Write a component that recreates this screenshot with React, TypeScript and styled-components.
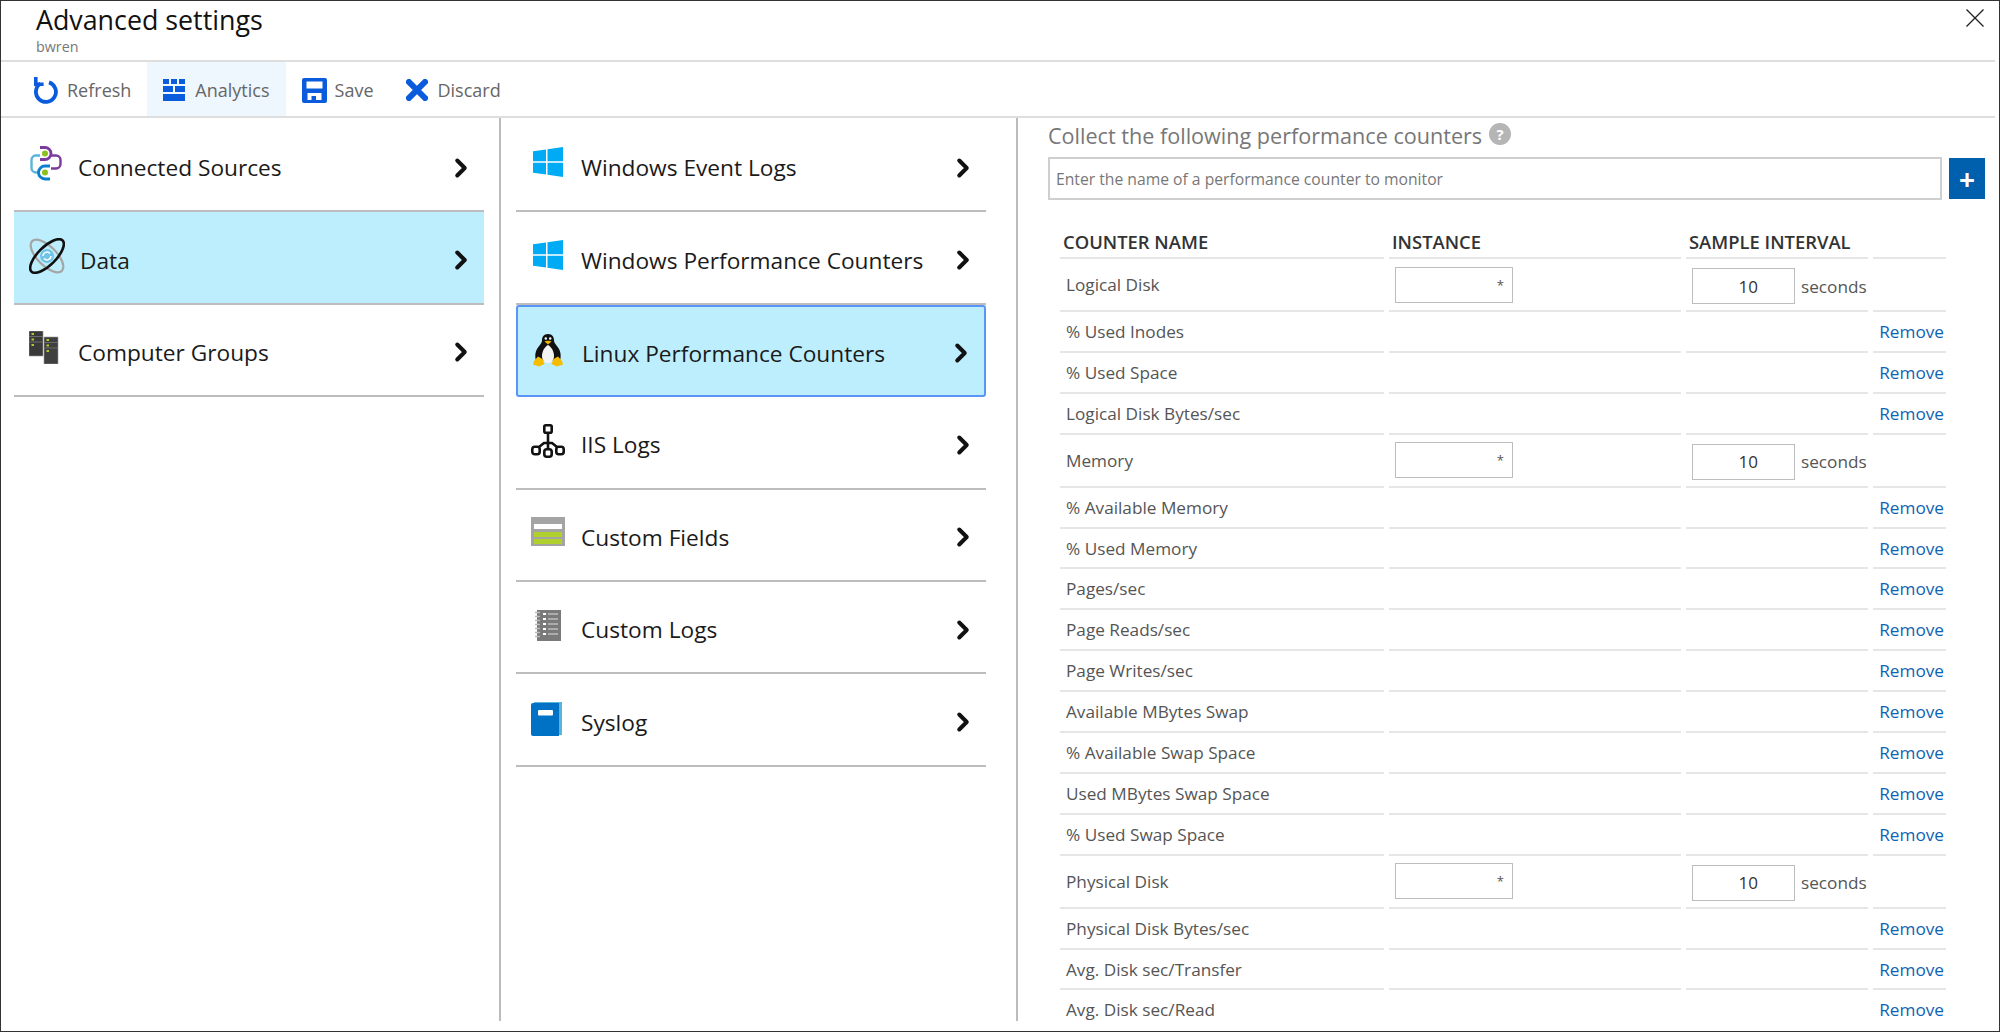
import React from "react";
import styled, { createGlobalStyle } from "styled-components";
import { FiChevronRight } from "react-icons/fi";

const GlobalStyle = createGlobalStyle`
  html, body {
    margin: 0;
    padding: 0;
    background: #fff;
    font-family: "Open Sans", "Liberation Sans", sans-serif;
  }
  * { box-sizing: border-box; }
`;

const blue = "#0a5cdc";

const RefreshIcon = () => (
  <svg width="26" height="27" viewBox="0 1 26 27">
    <path d="M7.500 7.500A10 10 0 1 0 16 6.400" fill="none" stroke={blue} strokeWidth="3.800" />
    <path d="M1 1h3.600v5.500h6v3.600H1z" fill={blue} />
  </svg>
);

const AnalyticsIcon = () => (
  <svg width="22" height="22" viewBox="0 0 22 22">
    <path d="M0 0h6v5H0zM8 0h6v5H8zM16 0h6v5h-6zM0 7h10v6H0zM12 7h10v6H12zM0 15h22v7H0z" fill={blue} />
  </svg>
);

const SaveIcon = () => (
  <svg width="25" height="25" viewBox="0 0 25 25">
    <path d="M2 0h21a2 2 0 0 1 2 2v21a2 2 0 0 1-2 2H2a2 2 0 0 1-2-2V2a2 2 0 0 1 2-2zm2.500 3.500v7h16v-7zM5.500 15v7h14v-7z" fill={blue} fillRule="evenodd" />
    <path d="M9.500 18h4.500v4.500H9.500z" fill={blue} />
  </svg>
);

const DiscardIcon = () => (
  <svg width="22" height="22" viewBox="0 0 22 22">
    <path d="M3 3l16 16M19 3L3 19" stroke={blue} strokeWidth="6" strokeLinecap="square" fill="none" />
  </svg>
);

const SourcesIcon = () => (
  <svg width="32" height="35" viewBox="0 0 32 35" fill="none">
    <path d="M10 9.500H5.500A4.500 4.500 0 0 0 1.500 14v8a4.500 4.500 0 0 0 4 4.500H9" stroke="#59b4d9" strokeWidth="2.400" />
    <path d="M20 9.500h6a4.500 4.500 0 0 1 4.500 4.500v4a4.500 4.500 0 0 1-4.500 4.500h-5" stroke="#7a3b9c" strokeWidth="2.400" />
    <path d="M10 1.500h5a6 6 0 0 1 0 12h-5" stroke="#7a3b9c" strokeWidth="2.800" />
    <path d="M20 20h-5a6.500 6.500 0 0 0 0 13h5" stroke="#0a7fd0" strokeWidth="2.800" />
    <circle cx="15" cy="7.500" r="3" fill="#8cbf1f" />
    <circle cx="15" cy="26.500" r="3" fill="#8cbf1f" />
  </svg>
);

const DataIcon = () => (
  <svg width="36" height="36" viewBox="0 0 36 36" fill="none">
    <ellipse cx="18" cy="18" rx="21" ry="9.500" transform="rotate(45 18 18)" stroke="#a5a5a5" strokeWidth="2.200" />
    <circle cx="18" cy="18" r="7" fill="#6fc4e8" />
    <path d="M14 18a4 4 0 0 1 7-2.500M22 18a4 4 0 0 1-7 2.500" stroke="#fff" strokeWidth="1.500" />
    <ellipse cx="18" cy="18" rx="22" ry="9" transform="rotate(-45 18 18)" stroke="#111" strokeWidth="2.600" />
  </svg>
);

const GroupsIcon = () => (
  <svg width="30" height="33" viewBox="0 0 30 33">
    <path d="M0 0h14v25H0z" fill="#3a3a3a" stroke="#999" strokeWidth=".6" />
    <path d="M15 6h14v27H15z" fill="#3f3f3f" stroke="#999" strokeWidth=".6" />
    <path d="M0 5.500h14M0 11h14M15 11.500h14M15 17h14" stroke="#6a6a6a" strokeWidth="1" />
    <path d="M2.500 3h2.500M2.500 8.500h2.500M2.500 14h2.500M17.500 9h2.500M17.500 14.500h2.500M17.500 20h2.500" stroke="#a8cc2a" strokeWidth="2" />
  </svg>
);

const WindowsIcon = () => (
  <svg width="30" height="30" viewBox="0 0 30 30">
    <path d="M0 4.300l13-1.800v11.800H0zM14.500 2.300L30 0v14.300H14.500zM0 15.800h13v11.800L0 25.800zM14.500 15.800H30V30l-15.500-2.200z" fill="#00abf5" />
  </svg>
);

const PenguinIcon = () => (
  <svg width="30" height="33" viewBox="0 0 30 33">
    <path d="M15 0c-4.500 0-6 3-6 6.500 0 2.500-2 4-4 7-2.500 3.500-3.500 8-2 13h24c1.500-5 .5-9.500-2-13-2-3-4-4.500-4-7C21 3 19.500 0 15 0z" fill="#111" />
    <path d="M15 11c-3.500 2-6 6.500-6 11 0 4 2.500 7 6 7s6-3 6-7c0-4.500-2.500-9-6-11z" fill="#f4f4f4" />
    <path d="M11.500 7.500c1.500-1 5.500-1 7 0L15 10.500z" fill="#f2b500" />
    <circle cx="12.800" cy="4.500" r="1.200" fill="#fff" />
    <circle cx="17.200" cy="4.500" r="1.200" fill="#fff" />
    <path d="M5 22.500l4.500 2.500 2 5-5.500 2.500-6-2 1-3.500zM25 22.500l-4.500 2.500-2 5 5.500 2.500 6-2-1-3.500z" fill="#f5bc00" />
  </svg>
);

const IisIcon = () => (
  <svg width="34" height="34" viewBox="0 0 34 34" fill="none" stroke="#111" strokeWidth="2.600">
    <rect x="13.300" y="1.300" width="7.400" height="7.400" rx="1.500" />
    <rect x="1.300" y="22.800" width="7.400" height="7.400" rx="2.500" />
    <rect x="13.300" y="25.300" width="7.400" height="7.400" rx="2.500" />
    <rect x="25.300" y="22.800" width="7.400" height="7.400" rx="2.500" />
    <path d="M17 9v16M8 23l5-4h8l5 4" />
  </svg>
);

const FieldsIcon = () => (
  <svg width="34" height="29" viewBox="0 0 34 29">
    <path d="M0 0h34v29H0z" fill="#a4a4a4" />
    <path d="M3 7h28v5H3z" fill="#fff" />
    <path d="M3 15h28v5H3zM3 22h28v5H3z" fill="#b0d02e" />
  </svg>
);

const LogsIcon = () => (
  <svg width="26" height="31" viewBox="0 0 26 31">
    <path d="M2 0h24v31H2z" fill="#7a7a7a" />
    <path d="M0 2.500h5M0 6.500h5M0 10.500h5M0 14.500h5M0 18.500h5M0 22.500h5M0 26.500h5" stroke="#bbb" strokeWidth="1.400" />
    <path d="M8 4h3M8 9h3M8 14h3M8 19h3M8 24h3" stroke="#fff" strokeWidth="2" />
    <path d="M13 4h10M13 9h10M13 14h10M13 19h10M13 24h10" stroke="#ddd" strokeWidth="1.200" />
  </svg>
);

const SyslogIcon = () => (
  <svg width="31" height="34" viewBox="0 0 31 34">
    <path d="M3 0h28v33H3z" fill="#59b4d9" />
    <path d="M2 1h26v33H2a2 2 0 0 1-2-2V3a2 2 0 0 1 2-2z" fill="#0072c6" />
    <rect x="7" y="8" width="15" height="5.500" rx="1" fill="#fff" />
  </svg>
);

const CloseIcon = () => (
  <svg width="18" height="18" viewBox="0 0 18 18">
    <path d="M.5.5l17 17M17.500.5l-17 17" stroke="#222" strokeWidth="1.300" fill="none" />
  </svg>
);

const Frame = styled.div`
  width: 2000px;
  height: 1032px;
  border: 1px solid #333;
  display: flex;
  flex-direction: column;
  overflow: hidden;
`;

const Header = styled.header`
  height: 61px;
  flex: none;
  margin-right: 4px;
  padding: 0 11px 0 35px;
  border-bottom: 2px solid #dedede;
  display: flex;
  justify-content: space-between;
`;

const Title = styled.h1`
  margin: 0;
  font-size: 26.800px;
  line-height: 37px;
  font-weight: 400;
  color: #111;
`;

const Subtitle = styled.div`
  font-size: 14.300px;
  line-height: 18px;
  color: #777;
`;

const CloseButton = styled.div`
  padding-top: 8px;
`;

const Toolbar = styled.nav`
  height: 56px;
  flex: none;
  margin-right: 4px;
  padding-left: 16px;
  border-bottom: 2px solid #dedede;
  display: flex;
`;

const ToolButton = styled.div<{ $active?: boolean; $gap: number }>`
  display: flex;
  align-items: center;
  gap: ${(p) => p.$gap}px;
  padding: 2px 16px 0;
  font-size: 18px;
  color: #666;
  background: ${(p) => (p.$active ? "#eef6fe" : "transparent")};
`;

const Body = styled.main`
  flex: 1;
  min-height: 0;
  display: flex;
  margin-bottom: 10px;
`;

const Column = styled.section<{ $width: number; $padLeft: number; $padRight: number }>`
  width: ${(p) => p.$width}px;
  flex: none;
  padding: 2px ${(p) => p.$padRight}px 0 ${(p) => p.$padLeft}px;
  border-right: 2px solid #bcbcbc;
`;

const MenuRow = styled.div<{ $selected?: boolean; $boxed?: boolean }>`
  height: 92.400px;
  display: flex;
  align-items: center;
  font-size: 22.700px;
  color: #1a1a1a;
  border-bottom: 2px solid #bdbdbd;
  background: ${(p) => (p.$selected ? "#bdeefd" : "transparent")};
  ${(p) => p.$boxed && "border: 2px solid #5a94f5; border-radius: 3px;"}
`;

const IconSlot = styled.div<{ $left: number; $width: number; $lift: number }>`
  margin-left: ${(p) => p.$left}px;
  width: ${(p) => p.$width}px;
  flex: none;
  display: flex;
  transform: translateY(-${(p) => p.$lift}px);
`;

const MenuLabel = styled.span`
  flex: 1;
  padding-top: 5px;
  white-space: nowrap;
`;

const Chevron = styled(FiChevronRight)`
  flex: none;
  margin: 5px 8px 0 0;
  font-size: 30px;
  stroke-width: 3.200;
  color: #111;
`;

const Pane = styled.section`
  flex: 1;
  min-width: 0;
  overflow: hidden;
  padding-left: 30px;
`;

const PaneTitle = styled.div`
  display: flex;
  align-items: center;
  gap: 7px;
  height: 39px;
  padding-bottom: 4px;
  font-size: 21.600px;
  color: #777;
`;

const HelpBadge = styled.span`
  width: 22px;
  height: 22px;
  margin-top: -4px;
  border-radius: 50%;
  background: #b5b5b5;
  color: #fff;
  font-size: 15px;
  font-weight: 700;
  display: flex;
  align-items: center;
  justify-content: center;
`;

const AddRow = styled.div`
  display: flex;
  gap: 7px;
  align-items: center;
`;

const CounterInput = styled.div`
  width: 894px;
  height: 43px;
  border: 2px solid #cfcfcf;
  padding: 0 6px;
  display: flex;
  align-items: center;
  font-size: 15.700px;
  color: #777;
`;

const AddButton = styled.div`
  width: 36px;
  height: 41px;
  background: #0060ae;
  color: #fff;
  font-size: 28px;
  font-weight: 700;
  line-height: 1;
  display: flex;
  align-items: center;
  justify-content: center;
`;

const Table = styled.table`
  margin: 29px 0 0 7px;
  border-collapse: separate;
  border-spacing: 5px 0;
  table-layout: fixed;
  width: 896px;
  font-size: 17.200px;
  color: #555;
`;

const HeadCell = styled.th<{ $width: number }>`
  width: ${(p) => p.$width}px;
  height: 30px;
  padding: 2px 0 0 3px;
  border-bottom: 2px solid #e6e6e6;
  text-align: left;
  vertical-align: top;
  font-size: 18.400px;
  line-height: 22px;
  font-weight: 600;
  color: #333;
  white-space: nowrap;
`;

const Cell = styled.td<{ $tall?: boolean }>`
  height: ${(p) => (p.$tall ? "53px" : "40.900px")};
  padding: 0 0 0 6px;
  border-bottom: 2px solid #e6e6e6;
  white-space: nowrap;
`;

const NameCell = styled(Cell)`
  padding-bottom: 0;
`;

const RemoveLink = styled.a`
  display: block;
  text-align: right;
  padding-right: 2px;
  color: #0d63b5;
`;

const IntervalBox = styled.div`
  display: flex;
  align-items: center;
  gap: 6px;
  margin-top: 3px;
`;

const ValueBox = styled.div<{ $width: number }>`
  width: ${(p) => p.$width}px;
  height: 36px;
  border: 1px solid #bdbdbd;
  padding: 0 8px;
  display: flex;
  align-items: center;
  justify-content: flex-end;
  font-size: 13px;
  color: #555;
`;

const IntervalValue = styled(ValueBox)`
  padding-right: 36px;
  font-size: 17px;
  color: #333;
`;

type Counter = { name: string; parent?: boolean };

const counters: Counter[] = [
  { name: "Logical Disk", parent: true },
  { name: "% Used Inodes" },
  { name: "% Used Space" },
  { name: "Logical Disk Bytes/sec" },
  { name: "Memory", parent: true },
  { name: "% Available Memory" },
  { name: "% Used Memory" },
  { name: "Pages/sec" },
  { name: "Page Reads/sec" },
  { name: "Page Writes/sec" },
  { name: "Available MBytes Swap" },
  { name: "% Available Swap Space" },
  { name: "Used MBytes Swap Space" },
  { name: "% Used Swap Space" },
  { name: "Physical Disk", parent: true },
  { name: "Physical Disk Bytes/sec" },
  { name: "Avg. Disk sec/Transfer" },
  { name: "Avg. Disk sec/Read" },
];

const sources = [
  { label: "Connected Sources", icon: <SourcesIcon />, left: 16, width: 48, lift: 2 },
  { label: "Data", icon: <DataIcon />, left: 15, width: 51, lift: 2, selected: true },
  { label: "Computer Groups", icon: <GroupsIcon />, left: 15, width: 49, lift: 2 },
];

const dataItems = [
  { label: "Windows Event Logs", icon: <WindowsIcon />, left: 17, width: 48, lift: 3 },
  { label: "Windows Performance Counters", icon: <WindowsIcon />, left: 17, width: 48, lift: 3 },
  { label: "Linux Performance Counters", icon: <PenguinIcon />, left: 15, width: 49, lift: 0, selected: true, boxed: true },
  { label: "IIS Logs", icon: <IisIcon />, left: 15, width: 50, lift: 1 },
  { label: "Custom Fields", icon: <FieldsIcon />, left: 15, width: 50, lift: 3 },
  { label: "Custom Logs", icon: <LogsIcon />, left: 19, width: 46, lift: 2 },
  { label: "Syslog", icon: <SyslogIcon />, left: 15, width: 50, lift: 1 },
];

type MenuItem = (typeof dataItems)[number];

const Menu = ({ items }: { items: MenuItem[] }) => (
  <>
    {items.map((item) => (
      <MenuRow key={item.label} $selected={item.selected} $boxed={item.boxed}>
        <IconSlot $left={item.left} $width={item.width} $lift={item.lift}>
          {item.icon}
        </IconSlot>
        <MenuLabel>{item.label}</MenuLabel>
        <Chevron />
      </MenuRow>
    ))}
  </>
);

export default function App() {
  return (
    <Frame>
      <GlobalStyle />
      <Header>
        <div>
          <Title>Advanced settings</Title>
          <Subtitle>bwren</Subtitle>
        </div>
        <CloseButton>
          <CloseIcon />
        </CloseButton>
      </Header>
      <Toolbar>
        <ToolButton $gap={8}>
          <RefreshIcon />
          Refresh
        </ToolButton>
        <ToolButton $gap={10} $active>
          <AnalyticsIcon />
          Analytics
        </ToolButton>
        <ToolButton $gap={8}>
          <SaveIcon />
          Save
        </ToolButton>
        <ToolButton $gap={10}>
          <DiscardIcon />
          Discard
        </ToolButton>
      </Toolbar>
      <Body>
        <Column $width={500} $padLeft={13} $padRight={15}>
          <Menu items={sources as MenuItem[]} />
        </Column>
        <Column $width={517} $padLeft={15} $padRight={30}>
          <Menu items={dataItems} />
        </Column>
        <Pane>
          <PaneTitle>
            Collect the following performance counters
            <HelpBadge>?</HelpBadge>
          </PaneTitle>
          <AddRow>
            <CounterInput>Enter the name of a performance counter to monitor</CounterInput>
            <AddButton>+</AddButton>
          </AddRow>
          <Table>
            <thead>
              <tr>
                <HeadCell $width={324}>COUNTER NAME</HeadCell>
                <HeadCell $width={292}>INSTANCE</HeadCell>
                <HeadCell $width={182}>SAMPLE INTERVAL</HeadCell>
                <HeadCell $width={73} />
              </tr>
            </thead>
            <tbody>
              {counters.map((c) => (
                <tr key={c.name}>
                  <NameCell $tall={c.parent}>{c.name}</NameCell>
                  <Cell $tall={c.parent}>{c.parent && <ValueBox $width={118}>*</ValueBox>}</Cell>
                  <Cell $tall={c.parent}>
                    {c.parent && (
                      <IntervalBox>
                        <IntervalValue $width={103}>10</IntervalValue>
                        seconds
                      </IntervalBox>
                    )}
                  </Cell>
                  <Cell $tall={c.parent}>{!c.parent && <RemoveLink>Remove</RemoveLink>}</Cell>
                </tr>
              ))}
            </tbody>
          </Table>
        </Pane>
      </Body>
    </Frame>
  );
}
